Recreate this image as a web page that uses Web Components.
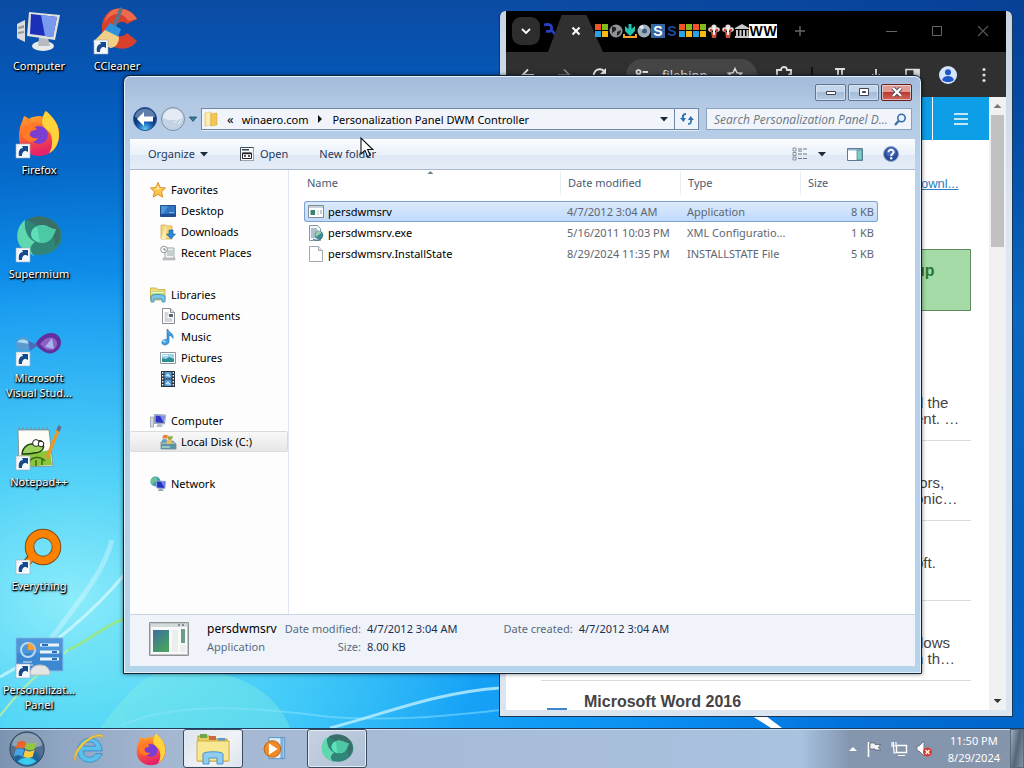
<!DOCTYPE html>
<html lang="en">
<head>
<meta charset="utf-8">
<title>Desktop</title>
<style>
  html, body { height: 100%; margin: 0; overflow: hidden; }
  body { font: 11px/15px "Noto Sans", "Open Sans", sans-serif; color: #000; }
</style>
</head>
<body>
<win-desktop></win-desktop>

<script>
const shortcut = '<rect x="1" y="33" width="14" height="14" fill="#f4f8fc" stroke="#9ab" stroke-width=".6"/><path d="M4 45c-1-5 1-8 4-8l-1-2h6v6l-2-1c-3 0-4 2-4 5z" fill="#164a8c"/>';
const firefox = '<circle cx="24" cy="27" r="20" fill="url(#a)"/><path d="M5 18c2-5 3-8 4-11 3 1 6 3 7 6 5-1 8 1 9 3L30 2c8 6 16 14 14 27-2 12-12 18-21 17C11 46 3 38 4 26z" fill="url(#a)"/><path d="M31 2c7 6 14 14 13 26-1 10-7 15-10 16 4-6 4-14 1-20-3-4-7-5-8-10 0-5 2-9 4-12z" fill="#ffd43a"/><circle cx="24" cy="26" r="9" fill="#7a3fd0"/><path d="M9 18c5-2 10-1 13 2-3 2-7 1-8 5 2 4 5 5 9 4-3 6-14 5-16-4z" fill="#ff7a22"/><defs><linearGradient id="a" x2=".3" y2="1"><stop stop-color="#ffb02e"/><stop offset=".5" stop-color="#ff6a2c"/><stop offset="1" stop-color="#e5236a"/></linearGradient></defs>';
const supermium = '<ellipse cx="25" cy="23" rx="22" ry="19" fill="#2f8577"/><path d="M12 7c9-7 26-4 32 8 3 8 1 14-4 19 1-10-3-16-11-18-5-1-9-5-17-9z" fill="#3a6f68"/><path d="M10 7C1 14 0 27 6 34l14 10c-6-6-6-11 0-15C12 25 9 17 10 7z" fill="#5fd8b0"/><ellipse cx="27" cy="21" rx="11" ry="9" fill="#5ee0b8"/><path d="M22 13c8-3 14 3 19 3-2 8-7 14-16 14z" fill="#4bc8a4"/>';
const ICONS = {
  computer: [48, '<g transform="translate(0 3)"><path d="M2 14l8-4v22l-8-4z" fill="#dcdcdc"/><path d="M3 17l6-2v3l-6 1zM3 22l6-1v2l-6 1z" fill="#999"/><ellipse cx="28" cy="36" rx="11" ry="5" fill="#e8eaec"/><path d="M24 28h9l2 8H23z" fill="#b8bcc2"/><path d="M14 2l31 3-5 25-28-4z" fill="#e2e2dc"/><path d="M16 4l26 3-4 20-23-3z" fill="#1c2fb8"/><path d="M26 5l16 2-4 20-8-1z" fill="#7a9af0"/></g>'],
  ccleaner: [48, '<path d="M44 12C39 3 28-1 19 3 9 8 6 22 12 32c7 12 25 13 32 2l-10-8c-4 5-10 4-12-1-2-7 6-14 12-8z" fill="#d9402c"/><path d="M44 12C38 2 26-1 18 4c-3 3-6 7-6 11 6-10 18-11 23-1z" fill="#ee6a4c"/><path d="M27 0l3 2-7 18-4-1z" fill="#5b7488"/><path d="M17 16l11 6-3 8-14-6z" fill="#2f93dc"/><path d="M12 23l14 7c0 6-3 10-8 11L0 35z" fill="#f1cf86"/>' + shortcut],
  firefox: [48, '<g transform="translate(0 -2)">' + firefox + '</g>' + shortcut],
  ff: [48, firefox],
  supermium: [48, '<g transform="translate(0 -2)">' + supermium + '</g>' + shortcut],
  superm: [48, supermium],
  vs: [48, '<g transform="translate(0 11)"><path d="M20 15C25 5 34 1 41 4c8 5 6 16-3 19-8 2-12-4-18-8z" fill="#62309c"/><path d="M25 14c5-7 11-8 15-5 4 4 2 9-3 11-5 1-8-2-12-6z" fill="#8b63c4"/><path d="M30 17l7-9 2 11z" fill="#a9b4ec"/><ellipse cx="8" cy="14" rx="7" ry="7" fill="#5b9bd0"/><path d="M2 12c4-4 10-3 13 2-4-1-9-1-13-2z" fill="#a8def4"/><path d="M13 11l10 4-8 6z" fill="#4a6cb4"/></g>' + shortcut],
  notepad: [48, '<g transform="translate(0 3)"><path d="M3 4h31l4 36-34 1z" fill="#fbfdf6" stroke="#777" stroke-width=".7"/><path d="M3 30l32-6 2 15-33 2z" fill="#89c63a"/><path d="M4 4v-3M8 4v-3M12 4v-3M16 4v-3M20 4v-3M24 4v-3M28 4v-3M32 4v-3" stroke="#888"/><path d="M7 28c1-8 8-12 13-9 1-5 7-6 8-1 2 5-2 9-9 9-4 1-8 1-12 1z" fill="#9bd35a" stroke="#1a3a10" stroke-width="1.4"/><circle cx="21" cy="17" r="3.4" fill="#fff" stroke="#222"/><circle cx="26" cy="18" r="2.8" fill="#fff" stroke="#222"/><path d="M14 37c2-7 12-7 16-2M21 40v-6M27 39v-6" stroke="#3a6a18" stroke-width="1.5" fill="none"/><path d="M32 32L44 2" stroke="#e59a2c" stroke-width="3.4"/><path d="M43 5l2-5" stroke="#5e6f99" stroke-width="3.4"/></g>' + shortcut],
  everything: [48, '<g transform="translate(0 2)"><circle cx="28" cy="18" r="13.5" fill="none" stroke="#7b4c1d" stroke-width="9.5"/><path d="M19 25L9 37" stroke="#7b4c1d" stroke-width="8"/><circle cx="28" cy="18" r="13.5" fill="none" stroke="#fb8200" stroke-width="7.6"/><path d="M19 26l-9 10" stroke="#fb8200" stroke-width="6"/></g>' + shortcut],
  personal: [48, '<g transform="translate(1 4)"><path d="M0 3h47v33H0z" fill="#3b87d2" stroke="#86bfe8"/><path d="M1 4h45v14H1z" fill="#5aa0de" opacity=".6"/><circle cx="12" cy="15" r="7" fill="none" stroke="#b9dcf4" stroke-width="2"/><path d="M12 8a7 7 0 017 7h-7z" fill="#f6a13a"/><path d="M24 10h19M24 17h19M24 24h19" stroke="#e9f4fb" stroke-width="3"/><path d="M26 10h6M36 17h5M36 24h5" stroke="#2a6fb8" stroke-width="2"/><path d="M7 27h9M8 30h9" stroke="#d5e9f7"/><path d="M14 40c0-7 4-10 10-10s10 3 10 10z" fill="#e4e6e4" stroke="#bbb"/></g>' + shortcut],

  star: [16, '<path d="M8 .5l2.2 5 5.3.5-4 3.700 1.300 5.500L8 12.400l-4.800 2.800 1.300-5.500-4-3.700 5.300-.5z" fill="#fbc34a" stroke="#d58a1c" stroke-width=".9"/><path d="M8 3l1.400 3.500 3 .3-5.400 1-3.500-.8 3-.5z" fill="#ffe9a0"/>'],
  desktop: [16, '<path d="M.5 2.500h15v11H.5z" fill="#2f74c0" stroke="#224f86"/><path d="M1 3h7l-4 7-3 1z" fill="#4d94d8"/><path d="M1 11h14v2.500H1z" fill="#1c4f94"/><path d="M9 9h5v1H9z" fill="#8ac"/>'],
  downloads: [16, '<path d="M1 1h5l1 1h5v13H1z" fill="#f5d67a" stroke="#d2a440" stroke-width=".7"/><path d="M6 1v14l-5 0z" fill="#fbeeb0"/><path d="M9 6h4v4h2.500L11 15 6.500 10H9z" fill="#2f87d8" stroke="#1c5a9c" stroke-width=".6"/>'],
  recent: [16, '<path d="M5 3h9v11H5z" fill="#f2f4f4" stroke="#8f989c" stroke-width=".9"/><path d="M7 6h6M7 8h6M7 10h6" stroke="#9aa"/><circle cx="4" cy="4.500" r="3.300" fill="#fff" stroke="#8f989c"/><path d="M4 3v2h2" stroke="#678" fill="none"/><path d="M3 13h12v2H3z" fill="#c3c9cb" stroke="#99a" stroke-width=".5"/>'],
  libraries: [16, '<path d="M.5 1h6l1 1.500H15V13H.5z" fill="#f4dd7c" stroke="#c7a43c" stroke-width=".8"/><path d="M2 4h12v4H2z" fill="#b6dc7c"/><path d="M2 5.500h12" stroke="#f4f8d8"/><path d="M1 15V9c3-2 11-2 14 0v6h-3v-3H4v3z" fill="#7cc4ea" stroke="#3a8aba" stroke-width=".8"/>'],
  documents: [16, '<path d="M2.500.5h8l4 4v11h-12z" fill="#fff" stroke="#8a8f96"/><path d="M10.500.5v4h4" fill="#ddd" stroke="#8a8f96"/><path d="M4.500 5h4M4.500 7h4M4.500 9h3M4.500 11h8M4.500 13h8" stroke="#aab"/><path d="M9 6h4v3H9z" fill="#567"/>'],
  music: [16, '<path d="M8 .5c1 4 6 3 5 9-1-2-2-3-4-3v6c0 2-2 3.500-4.200 3.500S1.500 14.500 2 12.800 5 10 7 10.500V.5z" fill="#3f9fe0" stroke="#256fae" stroke-width=".6"/><ellipse cx="4.500" cy="12.500" rx="1.500" ry="1" fill="#a8dcfa"/>'],
  pictures: [16, '<path d="M.5 2.500h15v11H.5z" fill="#fff" stroke="#8d979e"/><path d="M2 4h12v8H2z" fill="#9ad4ee"/><path d="M2 8l4 1 3-2 5 2v3H2z" fill="#2c8f94"/><path d="M3 5.500h5" stroke="#fff"/>'],
  videos: [16, '<path d="M1 0h14v16H1z" fill="#2b3440"/><path d="M4.500 1h7v6.500h-7zM4.500 8.500h7V15h-7z" fill="#4e9ad6"/><path d="M5 5l3-3 3 4zM5 13l3-3 3 4z" fill="#bfe0f2"/><path d="M2.700 1v15M13.300 1v15" stroke="#fff" stroke-width="1.300" stroke-dasharray="1.500 1.500"/>'],
  pc: [16, '<path d="M.5 4h3v10h-3z" fill="#d5dade" stroke="#8a949c" stroke-width=".7"/><path d="M4.500 1.500l11 .5-1 9-10-.5z" fill="#c9d2e0" stroke="#77849c" stroke-width=".7"/><path d="M5.500 2.500l9 .5-.8 7-8.200-.5z" fill="#2c35c0"/><path d="M10 2.800l4.500.2-.8 7z" fill="#7f8ff0"/><path d="M8 11h3l2 3H6z" fill="#b5bcc6"/>'],
  disk: [16, '<path d="M1 8l3-1h9l3 3v5H1z" fill="#a9b3ba" stroke="#69757e" stroke-width=".7"/><path d="M1 10h15v5H1z" fill="#5e93a4"/><path d="M2 13h8" stroke="#cfe"/><path d="M3 1.500c2-1 3-1 5 0L7 5C5.500 4 4 4 2.500 5z" fill="#e8803a"/><path d="M8.500 1.700c2 1 3 1 4.500 0L12 5.200c-1.500 1-3 1-4.500 0z" fill="#9aa83a"/><path d="M2.300 5.700c1.500-1 3-1 4.500 0L6 9c-1.500-1-3-1-4.500 0z" fill="#5b9ec0"/><path d="M7.300 6c1.500 1 3 1 4.500 0L11 9.300c-1.500 1-3 1-4.500 0z" fill="#f0c04a"/>'],
  network: [16, '<circle cx="5.500" cy="5.500" r="5" fill="#3f9fc0"/><path d="M2 3c3-3 6-1 5 1S3 6 2 9C0 7 0 5 2 3z" fill="#6fc48c"/><path d="M6.500 5l9 .4-.7 7-8-.4z" fill="#2434c0" stroke="#9aa9d0" stroke-width=".9"/><path d="M11 6l4 .2-.6 5.500z" fill="#7488f0"/><path d="M9 12.500h3l2 2.500H8z" fill="#9aa4b8"/>'],
  app: [16, '<path d="M.5 1.500h15v12H.5z" fill="#fff" stroke="#7f8b95"/><path d="M1 2h14v2H1z" fill="#c6d0d8"/><path d="M2.500 6H7v5H2.500z" fill="#3b8070"/><path d="M9 6h2v5H9z" fill="#dfe5ea"/><path d="M12.500 6h1v4h-1z" fill="#7a9a98"/>'],
  xml: [16, '<path d="M1.500.5h8l3 3v12h-11z" fill="#f4f8fb" stroke="#8996a0"/><path d="M3 4h6M3 6h7M3 8h6M3 10h6M3 12h5" stroke="#6688a6"/><circle cx="11" cy="10" r="4.300" fill="#3f8a94"/><path d="M8 8c2-3 5-2 5 0s-4 1-4 4c-2-1-2-3-1-4z" fill="#9ad0a8"/><path d="M5 14c3 2 7 1 9-1" stroke="#3c6a80" fill="none"/>'],
  file: [16, '<path d="M1.500.5h9l4 4v11h-13z" fill="#fff" stroke="#a3a8ac"/><path d="M10.500.5v4h4" fill="#eee" stroke="#a3a8ac"/>'],
  folder: [16, '<path d="M2 2l6-1v13l-6 1z" fill="#fbe9a2" stroke="#dcb650" stroke-width=".6"/><path d="M8 3l6-1v12l-6 1z" fill="#f0c654" stroke="#d6a83c" stroke-width=".6"/><path d="M5 1v14" stroke="#fff6cc"/>'],
  appbig: [40, '<path d="M.5 2.500h39v33H.5z" fill="#f8fafa" stroke="#8d9392"/><path d="M1.500 3.500h37v31h-37z" fill="none" stroke="#c2c6c6"/><path d="M2 4h36v3H2z" fill="#d3dada"/><path d="M29 4h2v2h-2zM33 4h2v2h-2z" fill="#889"/><path d="M4 10h16v22H4z" fill="url(#g)"/><path d="M23 10h6v22h-6z" fill="#eceeee"/><path d="M32 9h4v14h-4z" fill="#6b9c8c"/><path d="M31 25h6v7h-6z" fill="#eceeee"/><defs><linearGradient id="g" x2=".6" y2="1"><stop stop-color="#3d6fa0"/><stop offset="1" stop-color="#4aa060"/></linearGradient></defs>'],
  openapp: [16, '<path d="M1.500 1.500h13v13h-13z" fill="#f6f8fa" stroke="#44505c"/><path d="M3 3h7v1.500H3z" fill="#345"/><path d="M3.500 7h9v5.500h-9z" fill="#fff" stroke="#222"/><path d="M3.500 7.500h9" stroke="#222" stroke-width="1.500"/><path d="M5 10h2M9 10h2" stroke="#222" stroke-width="1.500"/><path d="M14.500 2v13M2 14.500h13" stroke="#99a6b2"/>'],
  views: [16, '<path d="M1 2h3v3H1zM1 6.500h3v3H1zM1 11h3v3H1z" fill="none" stroke="#7d8a98" stroke-width=".9"/><path d="M6 3h4M11 3h4M6 5h4M6 8h4M11 8h4M6 12.500h4M11 12.500h4" stroke="#6c7a88"/>'],
  pane: [16, '<path d="M.5 2.500h15v12H.5z" fill="#fff" stroke="#647a8e"/><path d="M1 3h14v1.500H1z" fill="#8fb4d0"/><path d="M10 4h5v10h-5z" fill="#7fcbc6" stroke="#4b8f94" stroke-width=".8"/>'],
  help: [16, '<circle cx="8" cy="8" r="7.500" fill="#2a4a9a" stroke="#93a4c8"/><circle cx="8" cy="6" r="5" fill="#5a7cc4" opacity=".6"/><path d="M5.500 6.300C5.500 2.800 10.800 3 10.600 6.200 10.400 8 8.200 7.800 8.200 10" fill="none" stroke="#fff" stroke-width="1.900"/><circle cx="8.200" cy="12.300" r="1.200" fill="#fff"/>'],
  refresh: [16, '<path d="M7 3C4 3 3.500 5 4 8" fill="none" stroke="#2f6fb0" stroke-width="2"/><path d="M1 7l3.500 4L7 7z" fill="#2f6fb0"/><path d="M9 13c3 0 3.500-2 3-5" fill="none" stroke="#3f86c0" stroke-width="2"/><path d="M9 9l2.500-4L15 9z" fill="#2f6fb0"/>'],
  search: [16, '<circle cx="9.500" cy="7" r="3.700" fill="#e6f2fc" stroke="#3a6ea8" stroke-width="1.600"/><path d="M6.500 10L3 14" stroke="#3a6ea8" stroke-width="2.200"/>'],
  down: [8, '<path d="M0 2h8L4 6.500z" fill="#1c2a3a"/>'],
  recentdown: [10, '<path d="M.5 2.500h9L5 8z" fill="#3f7fa0" stroke="#1c4a6a"/>'],
  right: [8, '<path d="M2 0v8l4-4z" fill="#111"/>'],
  orb: [24, '<circle cx="12" cy="12" r="11.500" fill="url(#b)" stroke="#2c5490"/><path d="M2 10C3-1 21-1 22 10c-6 3-14 3-20 0z" fill="#fff" opacity=".35"/><path d="M11 5l-7 7 7 7v-4.500h9v-5h-9z" fill="#fff"/><defs><radialGradient id="b" cy=".95"><stop stop-color="#5fd0f4"/><stop offset=".6" stop-color="#1c66b8"/><stop offset="1" stop-color="#0c3a80"/></radialGradient></defs>'],
  orboff: [24, '<circle cx="12" cy="12" r="11.500" fill="#c3d2e4" stroke="#7f90a6"/><path d="M2 11C3-1 21-1 22 11c-6 3-14 3-20 0z" fill="#e4ebf4"/><path d="M13 16l4-4M17 17l3-4" stroke="#e8f0f8"/>'],

  start: [40, '<circle cx="20" cy="20" r="18" fill="url(#s)" stroke="#23405e"/><path d="M4 16C7-1 33-1 36 16c-8 4-24 4-32 0z" fill="#fff" opacity=".35"/><path d="M10 13c3-2 6-2 9 0l-2 7c-3-2-6-2-9 0z" fill="#ee6328"/><path d="M20 13c3 2 6 2 10 0l-2 7c-3 2-6 2-10 0z" fill="#94c83c"/><path d="M8 21c3-2 6-2 9 0l-2 7c-3-2-6-2-9 0z" fill="#45a4e4"/><path d="M18 21c3 2 6 2 10 0l-2 7c-3 2-6 2-10 0z" fill="#fccb3c"/><path d="M10 33c6-5 14-5 20 0-6 4-14 4-20 0z" fill="#3fd8f8" opacity=".8"/><defs><radialGradient id="s" cy=".9"><stop stop-color="#3cb0e8"/><stop offset=".6" stop-color="#1a5e98"/><stop offset="1" stop-color="#54708c"/></radialGradient></defs>'],
  ie: [34, '<path d="M31 19H11c0 8 10 9 13 3h7c-5 13-25 12-26-3C5 2 30 0 31 19zM11 14h13c-1-6-12-6-13 0z" fill="#5cc0ee" stroke="#2c86c4" stroke-width=".8"/><path d="M3 31C-3 25 8 8 22 3c6-2 10-2 10 2-4-4-13 0-20 7S1 26 3 31z" fill="#f8cf3a" stroke="#d8a41c" stroke-width=".5"/>'],
  explorer: [36, '<path d="M3 5h12l2 3h15v22H3z" fill="#eccb5c" stroke="#b8963a"/><path d="M5 3h7v4H5z" fill="#6aa84a"/><path d="M14 5h7v4h-7z" fill="#cc6a3c"/><path d="M23 7h7v3h-7z" fill="#5a98c8"/><path d="M2 10h32v20H2z" fill="#f8e892" stroke="#d0ac48"/><path d="M8 33V23c0-3 20-3 20 0v10h-6v-6h-8v6z" fill="#8fcdf0" stroke="#4a94c8"/>'],
  wmp: [32, '<path d="M9 3h18v24H9z" fill="#dcecf8" stroke="#4a90c8"/><path d="M23 3v24M25 3v24" stroke="#3a7cb8"/><circle cx="13" cy="16" r="9.500" fill="#f08a24" stroke="#b85c10"/><path d="M9 9.500v13L19 16z" fill="#fff"/>'],
  up: [8, '<path d="M0 6h8L4 2z" fill="#fff"/>'],
  flagw: [16, '<path d="M2.500 1v15" stroke="#fff" stroke-width="1.600"/><path d="M4 2h5v1.500h5.500l-2 3 2 2.500H9V8H4z" fill="#eef3f8" stroke="#445" stroke-width=".6"/>'],
  net: [16, '<path d="M5.500 4.500h10v7h-10z" fill="#8494a8" stroke="#fff" stroke-width="1.400"/><path d="M7 14.500h7M2.500 1v7M1 1v4h4V1M3 8v4h2" stroke="#fff" stroke-width="1.200" fill="none"/>'],
  sound: [16, '<path d="M1 5h2l5-5v15l-5-5H1z" fill="#fff" stroke="#778"/><circle cx="11.500" cy="11" r="4.500" fill="#dd3a30"/><path d="M9.500 9l4 4M13.500 9l-4 4" stroke="#fff" stroke-width="1.400"/>'],

  cback: [16, '<path d="M14 8H3M8 2.500L2.500 8 8 13.500" fill="none" stroke="#dcdcdc" stroke-width="1.800"/>'],
  cfwd: [16, '<path d="M2 8h11M8 2.500L13.500 8 8 13.500" fill="none" stroke="#8a8a8a" stroke-width="1.600"/>'],
  creload: [16, '<path d="M13.500 9.500A6 6 0 112.200 6 6 6 0 0112 4" fill="none" stroke="#e4e4e4" stroke-width="1.900"/><path d="M14 1v6H8z" fill="#e4e4e4"/>'],
  tune: [16, '<circle cx="4.500" cy="5" r="2" fill="none" stroke="#e4e4e4" stroke-width="1.700"/><path d="M8.500 5H14M2 11h5.500" stroke="#e4e4e4" stroke-width="1.800"/><circle cx="11.500" cy="11" r="2" fill="none" stroke="#e4e4e4" stroke-width="1.700"/>'],
  cstar: [16, '<path d="M8 1.500l2 4.300 4.700.5-3.500 3.200 1 4.600L8 11.800l-4.200 2.300 1-4.600L1.300 6.300l4.700-.5z" fill="none" stroke="#dcdcdc" stroke-width="1.400"/>'],
  ext: [18, '<path d="M2 4h4c0-4 6-4 6 0h4v4c-3 0-3 4 0 4v4H2z" fill="none" stroke="#dcdcdc" stroke-width="1.800"/>'],
  lab: [18, '<path d="M4 3h10M7 3v6M11 3v6M7 9l-3 6h10l-3-6" fill="none" stroke="#dcdcdc" stroke-width="1.800"/>'],
  cdown: [18, '<path d="M9 3v9M5 8.500L9 12.500l4-4M3 15.500h12" fill="none" stroke="#dcdcdc" stroke-width="1.800"/>'],
  side: [18, '<path d="M3 3.500h13v11H3z" fill="none" stroke="#dcdcdc" stroke-width="1.600"/><path d="M10.500 3h6v12h-6z" fill="#dcdcdc"/>'],
  profile: [20, '<circle cx="10" cy="10" r="10" fill="#d5e3fc"/><circle cx="10" cy="7" r="3.300" fill="#1b57c8"/><path d="M3.500 15.500c1-6 12-6 13 0-3 3-10 3-13 0z" fill="#1b57c8"/>'],
  dots: [18, '<circle cx="9" cy="3.500" r="1.600" fill="#dcdcdc"/><circle cx="9" cy="9" r="1.600" fill="#dcdcdc"/><circle cx="9" cy="14.500" r="1.600" fill="#dcdcdc"/>'],
  chev: [16, '<path d="M4 6l4 4 4-4" fill="none" stroke="#fff" stroke-width="1.900"/>'],
  cx: [16, '<path d="M4.500 4.500l7 7M11.500 4.500l-7 7" stroke="#fff" stroke-width="2"/>'],
  plus: [16, '<path d="M8 3v10M3 8h10" stroke="#666" stroke-width="1.400"/>'],
  wmin: [16, '<path d="M3 8.500h11" stroke="#666"/>'],
  wmax: [16, '<path d="M3.500 3.500h9v9h-9z" fill="none" stroke="#666"/>'],
  wx: [16, '<path d="M3 3l10 10M13 3L3 13" stroke="#555" stroke-width="1.200"/>'],
  fblue: [16, '<path d="M2 2c6-2 9 1 7 5 3 1 3 4 5 6M4 8c3 1 5 0 6-1" fill="none" stroke="#2a3fc8" stroke-width="2.600"/>'],
  fms: [14, '<path d="M0 0h6v6H0z" fill="#f15322"/><path d="M7 0h6v6H7z" fill="#83bb1c"/><path d="M0 7h6v6H0z" fill="#28a3e8"/><path d="M7 7h6v6H7z" fill="#fbb813"/>'],
  fglobe: [14, '<circle cx="7" cy="7" r="6.500" fill="#8f9498"/><path d="M3 3c3-1 5 1 4 3S4 7 3 10zM8 8l4-2c0 3-2 5-4 6z" fill="#222"/>'],
  fdl: [14, '<path d="M5.500 0h3v5L12 2v5l-5 5-5-5V2l3.500 3z" fill="#1fc3b0"/><path d="M0 10h2v2h10v-2h2v4H0z" fill="#f5a32c"/>'],
  fdisc: [14, '<circle cx="7" cy="7" r="6.500" fill="#9fb0bc"/><path d="M7 7L2 3a6 6 0 014-2z" fill="#dfe8ee"/><circle cx="7.500" cy="7" r="2.500" fill="#3c5c80"/>'],
  ftree: [14, '<circle cx="7" cy="3" r="2.600" fill="#e9e2dc"/><circle cx="3.500" cy="5.500" r="2.300" fill="#e9e2dc"/><circle cx="10.500" cy="5.500" r="2.300" fill="#e9e2dc"/><circle cx="4" cy="6" r="1.300" fill="#d84030"/><circle cx="10" cy="6" r="1.300" fill="#d84030"/><path d="M4 8h6l-1 6H5z" fill="#c8503c"/><path d="M6 3h2v8H6z" fill="#f6f0e8"/>'],
  fbank: [14, '<path d="M0 4l7-4 7 4v1H0zM1 6h2v6H1zM4.500 6h2v6h-2zM8 6h2v6H8zM11.500 6h2v6h-2zM0 12h14v2H0z" fill="#c9c9c9"/>'],
  cursor: [20, '<path d="M1 0v16l4-3.600 2.600 6.200 2.600-1.100-2.600-6h5.200z" fill="#fff" stroke="#111" stroke-width="1.100"/>'],
};

class SysIcon extends HTMLElement {
  connectedCallback() {
    const [box, art] = ICONS[this.getAttribute('name')];
    const size = this.getAttribute('size') || box;
    this.attachShadow({ mode: 'open' }).innerHTML =
      `<style>:host{display:inline-flex;flex:none}svg{display:block;overflow:visible}</style>
       <svg width="${size}" height="${size}" viewBox="0 0 ${box} ${box}" aria-hidden="true">${art}</svg>`;
  }
}
customElements.define('sys-icon', SysIcon);

function component(name, html) {
  const t = document.createElement('template');
  t.innerHTML = html;
  customElements.define(name, class extends HTMLElement {
    connectedCallback() {
      if (this.shadowRoot) return;
      this.attachShadow({ mode: 'open' }).append(t.content.cloneNode(true));
    }
  });
}

component('desk-icon', `
<style>
  :host { display: block; }
  a { display: flex; flex-direction: column; align-items: center; color: #fff; text-decoration: none; text-align: center;
      text-shadow: 1px 1px 2px #000, 0 1px 2px #000, 1px 1px 1px #000; }
  slot[name] { display: block; margin-bottom: 3px; height: 48px; }
</style>
<a href="#"><slot name="icon"></slot><span><slot></slot></span></a>`);

component('task-button', `
<style>
  :host { display: flex; width: 62px; }
  button { flex: 1; display: flex; align-items: center; justify-content: center; margin: 0 1px; padding: 0; border: 1px solid transparent; background: none; }
  :host([open]) button { border-color: #3c4c60; border-radius: 3px; box-shadow: inset 0 0 0 1px #e4ecf4; background: linear-gradient(135deg, #c6d2e2, #aebfd6); }
  :host([active]) button { background: linear-gradient(135deg, #dde4ec, #f0f3f7 60%, #dbe2ec); }
</style>
<button aria-label="Taskbar item"><slot></slot></button>`);

component('win-taskbar', `
<style>
  :host { display: flex; height: 40px; box-sizing: border-box; border-top: 1px solid #1c3c60; box-shadow: inset 0 1px #d0e0f0;
          background: linear-gradient(90deg, #7b93b0, #8fa5c1 60px, #a5b8d2 170px, #a8bedb 600px, #a8c2e0 800px, #8496ae 850px, #8495ab); color: #fff; }
  .start { width: 58px; padding: 0; border: 0; background: none; display: flex; justify-content: center; align-items: center; padding-right: 4px; }
  .tray { margin-left: auto; display: flex; align-items: center; gap: 9px; }
  time { text-align: center; line-height: 17px; margin: 0 1px 0 7px; }
  .peek { width: 14px; padding: 0; border: 1px solid #5a6a7c; background: linear-gradient(100deg, #a0aebe, #56667a 50%, #8594a6); align-self: stretch; }
</style>
<button class="start" aria-label="Start"><sys-icon name="start" size="38"></sys-icon></button>
<task-button><sys-icon name="ie" size="32"></sys-icon></task-button>
<task-button><sys-icon name="ff" size="34"></sys-icon></task-button>
<task-button open active><sys-icon name="explorer"></sys-icon></task-button>
<task-button><sys-icon name="wmp" size="28"></sys-icon></task-button>
<task-button open><sys-icon name="superm" size="34"></sys-icon></task-button>
<div class="tray">
  <sys-icon name="up"></sys-icon><sys-icon name="flagw"></sys-icon><sys-icon name="net"></sys-icon><sys-icon name="sound"></sys-icon>
  <time datetime="2024-08-29T23:50">11:50 PM<br>8/29/2024</time>
  <button class="peek" aria-label="Show desktop"></button>
</div>`);

component('nav-item', `
<style>
  :host { display: block; }
  a { display: flex; align-items: center; gap: 5px; height: 21px; padding-left: 30px; color: #000; text-decoration: none; box-sizing: border-box; border: 1px solid transparent; border-left: 0; }
  :host([head]) a { padding-left: 20px; }
  :host([current]) a { background: linear-gradient(#f8f8f8, #e7e7e7); border-color: #dadada; border-radius: 2px; }
</style>
<a href="#"><slot name="icon"></slot><slot></slot></a>`);

component('nav-tree', `
<style>
  :host { display: flex; flex-direction: column; gap: 21px; padding-top: 9px; box-sizing: border-box; border-right: 1px solid #dfe7f2; background: #fdfdfe; }
</style>
<div>
  <nav-item head><sys-icon slot="icon" name="star"></sys-icon>Favorites</nav-item>
  <nav-item><sys-icon slot="icon" name="desktop"></sys-icon>Desktop</nav-item>
  <nav-item><sys-icon slot="icon" name="downloads"></sys-icon>Downloads</nav-item>
  <nav-item><sys-icon slot="icon" name="recent"></sys-icon>Recent Places</nav-item>
</div>
<div>
  <nav-item head><sys-icon slot="icon" name="libraries"></sys-icon>Libraries</nav-item>
  <nav-item><sys-icon slot="icon" name="documents"></sys-icon>Documents</nav-item>
  <nav-item><sys-icon slot="icon" name="music"></sys-icon>Music</nav-item>
  <nav-item><sys-icon slot="icon" name="pictures"></sys-icon>Pictures</nav-item>
  <nav-item><sys-icon slot="icon" name="videos"></sys-icon>Videos</nav-item>
</div>
<div>
  <nav-item head><sys-icon slot="icon" name="pc"></sys-icon>Computer</nav-item>
  <nav-item current><sys-icon slot="icon" name="disk"></sys-icon>Local Disk (C:)</nav-item>
</div>
<div>
  <nav-item head><sys-icon slot="icon" name="network"></sys-icon>Network</nav-item>
</div>`);

component('file-list', `
<style>
  :host { display: block; background: #fff; padding: 1px 37px 0 15px; }
  table { width: 100%; table-layout: fixed; border-collapse: separate; border-spacing: 0; color: #5e6670; }
  .date, .type { width: 120px; } .size { width: 77px; }
  th { height: 24px; padding: 0 0 2px 7px; box-sizing: border-box; text-align: left; font-weight: 400; color: #4c5a70; box-shadow: inset -1px 0 #e6edf5; position: relative; }
  th:first-child { padding-left: 3px; }
  th:last-child { box-shadow: none; }
  .mark { position: absolute; left: 48%; top: 0; width: 6px; height: 3px; background: #6f8092; clip-path: polygon(50% 0, 100% 100%, 0 100%); }
  thead tr:last-child th { height: 6px; padding: 0; box-shadow: none; }
  td { height: 21px; padding: 0 4px 0 6px; box-sizing: border-box; white-space: nowrap; overflow: hidden; text-overflow: ellipsis; border: 1px solid transparent; border-width: 1px 0; }
  td:first-child { padding-left: 4px; color: #000; }
  td:last-child { text-align: right; }
  .n { display: flex; align-items: center; gap: 4px; }
  .sel td { background: linear-gradient(#dceafc, #c1dbfc); border-color: #7da2ce; }
  .sel td:first-child { border-left: 1px solid #7da2ce; border-radius: 3px 0 0 3px; padding-left: 3px; }
  .sel td:last-child { border-right: 1px solid #7da2ce; border-radius: 0 3px 3px 0; padding-right: 3px; }
</style>
<table>
  <colgroup><col><col class="date"><col class="type"><col class="size"></colgroup>
  <thead>
    <tr><th>Name<span class="mark"></span></th><th>Date modified</th><th>Type</th><th>Size</th></tr>
    <tr aria-hidden="true"><th colspan="4"></th></tr>
  </thead>
  <tbody>
    <tr class="sel"><td><div class="n"><sys-icon name="app"></sys-icon>persdwmsrv</div></td><td>4/7/2012 3:04 AM</td><td>Application</td><td>8 KB</td></tr>
    <tr><td><div class="n"><sys-icon name="xml"></sys-icon>persdwmsrv.exe</div></td><td>5/16/2011 10:03 PM</td><td>XML Configuratio...</td><td>1 KB</td></tr>
    <tr><td><div class="n"><sys-icon name="file"></sys-icon>persdwmsrv.InstallState</div></td><td>8/29/2024 11:35 PM</td><td>INSTALLSTATE File</td><td>5 KB</td></tr>
  </tbody>
</table>`);

component('explorer-window', `
<style>
  :host { display: flex; flex-direction: column; box-sizing: border-box; border: 1px solid #0d2238; border-radius: 7px 7px 0 0; padding: 0 6px 7px;
          background: linear-gradient(#a3bbd9, #b3c9e4 30px, #b9d1ea 90px, #b6d0ea 60%, #b4d4ec); box-shadow: inset 0 0 0 1px #e6f0fa, 0 0 4px #0008; }
  button { font: inherit; color: inherit; padding: 0; border: 0; background: none; }
  .caption { display: flex; justify-content: flex-end; gap: 2px; height: 30px; align-items: center; padding: 2px 3px 0 0; box-sizing: border-box; }
  .caption button { width: 31px; height: 17px; box-sizing: border-box; border: 1px solid #5d7694; border-radius: 2px; box-shadow: inset 0 0 0 1px #e0ebf7aa; display: flex; align-items: center; justify-content: center;
     background: linear-gradient(#c6d6ea 45%, #a4bad6 50%, #b8cde4); }
  .caption .close { border-color: #6c1f1c; background: linear-gradient(#e39a90 45%, #bd3a30 50%, #d4675c); }
  .nav { display: flex; align-items: center; height: 26px; margin-bottom: 7px; padding: 0 3px; }
  .nav > sys-icon { margin-right: 4px; }
  .addr { flex: 1; min-width: 0; display: flex; align-items: center; height: 22px; box-sizing: border-box; margin: 0 7px 0 0; border: 1px solid #6f8aa8; background: #f1f5fb; box-shadow: 0 1px #dfeaf6; }
  .addr a { color: #000; text-decoration: none; white-space: nowrap; }
  .crumbs { display: flex; align-items: center; gap: 8px; flex: 1; padding-left: 1px; }
  .crumbs span { font-size: 13px; }
  .addr .drop { width: 20px; display: flex; justify-content: center; }
  .addr .go { width: 24px; align-self: stretch; border-left: 1px solid #6f8aa8; display: flex; align-items: center; justify-content: center; }
  .find { display: flex; align-items: center; width: 206px; height: 22px; box-sizing: border-box; border: 1px solid #8ba3bf; background: #f1f5fb; padding: 0 3px 0 7px; }
  .find input { flex: 1; min-width: 0; font: inherit; font-size: 12px; font-style: italic; font-family: "Open Sans", sans-serif; border: 0; padding: 0; background: none; outline: 0; }
  .find input::placeholder { color: #6d7681; opacity: 1; }
  .tools { display: flex; align-items: center; height: 31px; box-sizing: border-box; padding: 0 16px 2px 18px; color: #1e395b; border-top: 1px solid #fff; border-bottom: 1px solid #a9b9cd;
     background: linear-gradient(#fafcfe, #eaf1fa 50%, #dfe9f5 52%, #e3ecf7); }
  .tools button { display: flex; align-items: center; gap: 5px; margin-right: 31px; }
  .tools button:nth-child(4) { margin-left: auto; gap: 10px; margin-right: 21px; }
  .tools button:nth-child(5) { margin-right: 20px; }
  .tools button:last-child { margin: 0; }
  .body { flex: 1; min-height: 0; display: grid; grid-template-columns: 159px 1fr; background: #fff; }
  .details { display: flex; align-items: flex-start; height: 52px; box-sizing: border-box; border-top: 1px solid #ccd6e3; background: #f0f4fa; padding: 5px 19px; color: #5a6a80; line-height: 18px; }
  dl { display: grid; grid-template-columns: auto auto; gap: 0 6px; margin: 0 0 0 8px; }
  dl + dl { margin-left: 46px; }
  dt { text-align: right; } dd { margin: 0; color: #1e2f4c; }
  .title { margin-left: 18px; }
  .title b { display: block; font-weight: 400; font-size: 12px; color: #000; }
</style>
<div class="caption">
  <button aria-label="Minimize"><svg width="12" height="8"><path d="M1.500 3.500h9v3h-9z" fill="#fff" stroke="#445"/></svg></button>
  <button aria-label="Maximize"><svg width="12" height="10"><path d="M1.500 1.500h9v7h-9z" fill="#fff" stroke="#445"/><path d="M4.500 4.500h3v1h-3z" fill="#445" stroke="#445"/></svg></button>
  <button class="close" aria-label="Close"><svg width="12" height="10"><path d="M2 1l8 8M10 1L2 9" stroke="#445" stroke-width="4"/><path d="M2 1l8 8M10 1L2 9" stroke="#fff" stroke-width="2.400"/></svg></button>
</div>
<div class="nav">
  <sys-icon name="orb"></sys-icon><sys-icon name="orboff"></sys-icon><sys-icon name="recentdown" size="8"></sys-icon>
  <div class="addr">
    <div class="crumbs"><sys-icon name="folder"></sys-icon><span>«</span><a href="#">winaero.com</a><sys-icon name="right"></sys-icon><a href="#">Personalization Panel DWM Controller</a></div>
    <button class="drop" aria-label="Previous locations"><sys-icon name="down"></sys-icon></button>
    <button class="go" aria-label="Refresh"><sys-icon name="refresh"></sys-icon></button>
  </div>
  <label class="find"><input type="text" aria-label="Search" placeholder="Search Personalization Panel D..."><sys-icon name="search"></sys-icon></label>
</div>
<div class="tools">
  <button>Organize <sys-icon name="down"></sys-icon></button>
  <button><sys-icon name="openapp"></sys-icon>Open</button>
  <button>New folder</button>
  <button aria-label="Change your view"><sys-icon name="views"></sys-icon><sys-icon name="down"></sys-icon></button>
  <button aria-label="Preview pane"><sys-icon name="pane"></sys-icon></button>
  <button aria-label="Help"><sys-icon name="help"></sys-icon></button>
</div>
<div class="body"><nav-tree></nav-tree><file-list></file-list></div>
<div class="details">
  <sys-icon name="appbig"></sys-icon>
  <div class="title"><b>persdwmsrv</b>Application</div>
  <dl><dt>Date modified:</dt><dd>4/7/2012 3:04 AM</dd><dt>Size:</dt><dd>8.00 KB</dd></dl>
  <dl><dt>Date created:</dt><dd>4/7/2012 3:04 AM</dd></dl>
</div>`);

component('browser-window', `
<style>
  :host { display: flex; flex-direction: column; box-sizing: border-box; border: 1px solid #1b3554; border-top: 0; border-radius: 6px 6px 0 0; padding: 0 6px 6px;
     background: linear-gradient(#c8d4e4, #dde6f0 30%, #dbe5f0); font-family: "Liberation Sans", Arial, sans-serif; }
  button { padding: 0; border: 0; background: none; display: flex; }
  .tabs { display: flex; align-items: center; height: 41px; background: #000; padding: 0 15px 2px 6px; box-sizing: border-box; }
  .menu { width: 28px; height: 28px; border-radius: 9px; background: #2d2d2d; align-items: center; justify-content: center; margin-right: 2px; }
  .tab { width: 55px; height: 37px; align-self: flex-end; margin: 0 0 -2px -10px; background: #303030; clip-path: polygon(25% 0, 70% 0, 100% 100%, 0 100%); display: flex; align-items: center; justify-content: center; box-sizing: border-box; padding-bottom: 5px; }
  .fav { display: flex; margin: 0 15px 0 -8px; z-index: 1; }
  .fav span { width: 14px; height: 14px; font: bold 14px/14px "Liberation Sans"; text-align: center; overflow: hidden; }
  .sb { background: #3567a4; color: #fff; } .sd { color: #1f4a9c; } .w { background: #fff; color: #000; }
  .ctl { display: flex; gap: 30px; margin-left: auto; }
  .bar { display: flex; flex: none; align-items: center; height: 45px; background: #303030; padding: 0 13px 0 14px; gap: 18px; color: #e6e6e6; }
  .omni { display: flex; align-items: center; flex: 1; min-width: 0; height: 32px; border-radius: 16px; background: #454545; padding: 0 14px 0 8px; gap: 12px; font: 13px/18px "Open Sans", sans-serif; }
  .omni input { font: inherit; color: inherit; background: none; border: 0; padding: 0; flex: 1; min-width: 0; width: 0; }
  .back { gap: 20px; display: flex; }
  .sep { width: 2px; height: 16px; background: #111; }
  .view { flex: 1; min-height: 0; display: grid; grid-template-columns: 1fr 17px; background: #fff; }
  .page { overflow: hidden; color: #444; font-size: 15px; line-height: 16px; display: flex; flex-direction: column; }
  .page > * { flex: none; }
  header { height: 43px; background: #0d9ee8; display: flex; justify-content: flex-end; }
  header button { width: 57px; border-left: 1px solid #fff; box-sizing: border-box; align-items: center; justify-content: center; flex: none; }
  .link { margin: 36px 0 57px; padding-left: 415px; font-size: 13px; }
  .link a { color: #2f7cc0; }
  .cta { height: 62px; box-sizing: border-box; border: 1px solid #5d8a5f; background: #a5dba6; margin: 0 18px 50px 77px; color: #2c7530; font-weight: 700; font-size: 16px; padding: 13px 0 0 331px; }
  article { height: 80px; box-sizing: border-box; border-bottom: 1px solid #dcdcdc; margin: 0 18px 0 35px; padding: 34px 0 0 374px; }
  article p { margin: 0; }
  .next { display: flex; gap: 17px; margin-left: 41px; padding-top: 11px; }
  .next i { width: 20px; height: 2px; margin-top: 16px; background: #3f86cc; }
  .next h3 { margin: 0; font-size: 16px; line-height: 20px; }
  .scroll { background: #f1f1f1; display: flex; flex-direction: column; align-items: center; }
  .scroll i { width: 8px; height: 4px; margin: 7px 0; background: #777; clip-path: polygon(50% 0, 100% 100%, 0 100%); }
  .scroll i:last-child { margin-top: auto; background: #333; clip-path: polygon(0 0, 100% 0, 50% 100%); }
  .thumb { width: 13px; height: 132px; background: #c1c1c1; }
</style>
<div class="tabs">
  <button class="menu" aria-label="Search tabs"><sys-icon name="chev"></sys-icon></button>
  <sys-icon name="fblue"></sys-icon>
  <div class="tab"><sys-icon name="cx"></sys-icon></div>
  <div class="fav"><sys-icon name="fms"></sys-icon><sys-icon name="fglobe"></sys-icon><sys-icon name="fdl"></sys-icon><sys-icon name="fdisc"></sys-icon><span class="sb">S</span><span class="sd">S</span><sys-icon name="fms"></sys-icon><sys-icon name="fms"></sys-icon><sys-icon name="ftree"></sys-icon><sys-icon name="ftree"></sys-icon><sys-icon name="fbank"></sys-icon><span class="w">W</span><span class="w">W</span></div>
  <button aria-label="New tab"><sys-icon name="plus"></sys-icon></button>
  <div class="ctl"><button aria-label="Minimize"><sys-icon name="wmin"></sys-icon></button><button aria-label="Maximize"><sys-icon name="wmax"></sys-icon></button><button aria-label="Close"><sys-icon name="wx"></sys-icon></button></div>
</div>
<div class="bar">
  <div class="back"><button aria-label="Back"><sys-icon name="cback"></sys-icon></button><button aria-label="Forward"><sys-icon name="cfwd"></sys-icon></button><button aria-label="Reload"><sys-icon name="creload"></sys-icon></button></div>
  <div class="omni"><sys-icon name="tune"></sys-icon><input aria-label="Address" value="filehipp"><sys-icon name="cstar"></sys-icon></div>
  <button aria-label="Extensions"><sys-icon name="ext"></sys-icon></button><span class="sep"></span>
  <button aria-label="Labs"><sys-icon name="lab"></sys-icon></button><button aria-label="Downloads"><sys-icon name="cdown"></sys-icon></button><button aria-label="Side panel"><sys-icon name="side"></sys-icon></button><button aria-label="Profile"><sys-icon name="profile" size="18"></sys-icon></button><button aria-label="Menu"><sys-icon name="dots"></sys-icon></button>
</div>
<div class="view">
  <div class="page">
    <header><button aria-label="Menu"><svg width="14" height="12"><path d="M0 1h14M0 6h14M0 11h14" stroke="#fff" stroke-width="1.500"/></svg></button></header>
    <div class="link"><a href="#">ownl...</a></div>
    <div class="cta">up</div>
    <article><p>d the</p><p>ent. …</p></article>
    <article><p>tors,</p><p>onic…</p></article>
    <article><p>oft.</p></article>
    <article><p>dows</p><p>n th…</p></article>
    <div class="next"><i></i><h3>Microsoft Word 2016</h3></div>
  </div>
  <div class="scroll"><i></i><div class="thumb"></div><i></i></div>
</div>`);

component('wall-paper', `
<style>
  :host { display: block; background:
    radial-gradient(ellipse 420px 330px at 70px 600px, #8cecfa, #5cdcf8cc 40%, #2cbcf500 100%),
    radial-gradient(ellipse 700px 560px at 160px 720px, #2fc4fa, #17a0f4bb 55%, #0a80e000 100%),
    linear-gradient(90deg, #0000 50%, #00308066),
    linear-gradient(#0b4ba4, #0558b8 12%, #0670d0 28%, #0c8cec 42%, #0080ec 80%, #0088fa); }
  svg { width: 100%; height: 100%; display: block; }
</style>
<svg viewBox="0 0 1024 728" preserveAspectRatio="none" fill="none" aria-hidden="true">
  <path d="M0 728C20 690 60 660 125 617V728z" fill="#5fe0f0" opacity=".25"/>
  <path d="M100 728C130 690 150 660 200 670c50 5 80 30 90 58z" fill="#8cf0e0" opacity=".35"/>
  <path d="M0 677C50 650 95 610 124 575" stroke="#d8fbff" stroke-width="3" opacity=".7"/>
  <path d="M50 640C80 600 105 570 112 540" stroke="#fff" stroke-width="5" opacity=".3"/>
  <path d="M68 650C90 640 105 625 124 619" stroke="#9be86a" stroke-width="3" opacity=".7"/>
  <path d="M0 716C20 690 30 680 68 650" stroke="#b8f0a0" stroke-width="2" opacity=".9"/>
  <path d="M122 725C180 700 260 708 330 717c60 4 110 0 170-7" stroke="#8ce4ff" stroke-width="2" opacity=".5"/>
  <path d="M330 728C390 712 440 692 500 688" stroke="#bdf0ff" stroke-width="3" opacity=".8"/>
  <path d="M752 716l14 0 16 12h-11z" fill="#fff"/>
</svg>`);

component('win-desktop', `
<style>
  :host { display: grid; grid-template-rows: minmax(0, 1fr) 40px; height: 100vh; position: relative; overflow: hidden; }
  wall-paper { position: absolute; inset: 0 0 40px; }
  .icons { position: relative; display: grid; grid-auto-flow: column; grid-template-rows: repeat(7, 104px); grid-auto-columns: 78px; padding-top: 7px; justify-content: start; }
  win-taskbar { position: relative; }
  browser-window { position: absolute; inset: 11px 11px 51px auto; width: 514px; }
  explorer-window { position: absolute; inset: 75px 102px 94px 123px; }
  .cursor { position: absolute; left: 360px; top: 138px; }
</style>
<wall-paper></wall-paper>
<div class="icons">
  <desk-icon><sys-icon slot="icon" name="computer"></sys-icon>Computer</desk-icon>
  <desk-icon><sys-icon slot="icon" name="firefox"></sys-icon>Firefox</desk-icon>
  <desk-icon><sys-icon slot="icon" name="supermium"></sys-icon>Supermium</desk-icon>
  <desk-icon><sys-icon slot="icon" name="vs"></sys-icon>Microsoft<br>Visual Stud...</desk-icon>
  <desk-icon><sys-icon slot="icon" name="notepad"></sys-icon>Notepad++</desk-icon>
  <desk-icon><sys-icon slot="icon" name="everything"></sys-icon>Everything</desk-icon>
  <desk-icon><sys-icon slot="icon" name="personal"></sys-icon>Personalizat...<br>Panel</desk-icon>
  <desk-icon><sys-icon slot="icon" name="ccleaner"></sys-icon>CCleaner</desk-icon>
</div>
<browser-window></browser-window>
<explorer-window></explorer-window>
<sys-icon class="cursor" name="cursor"></sys-icon>
<win-taskbar></win-taskbar>`);
</script>
</body>
</html>
